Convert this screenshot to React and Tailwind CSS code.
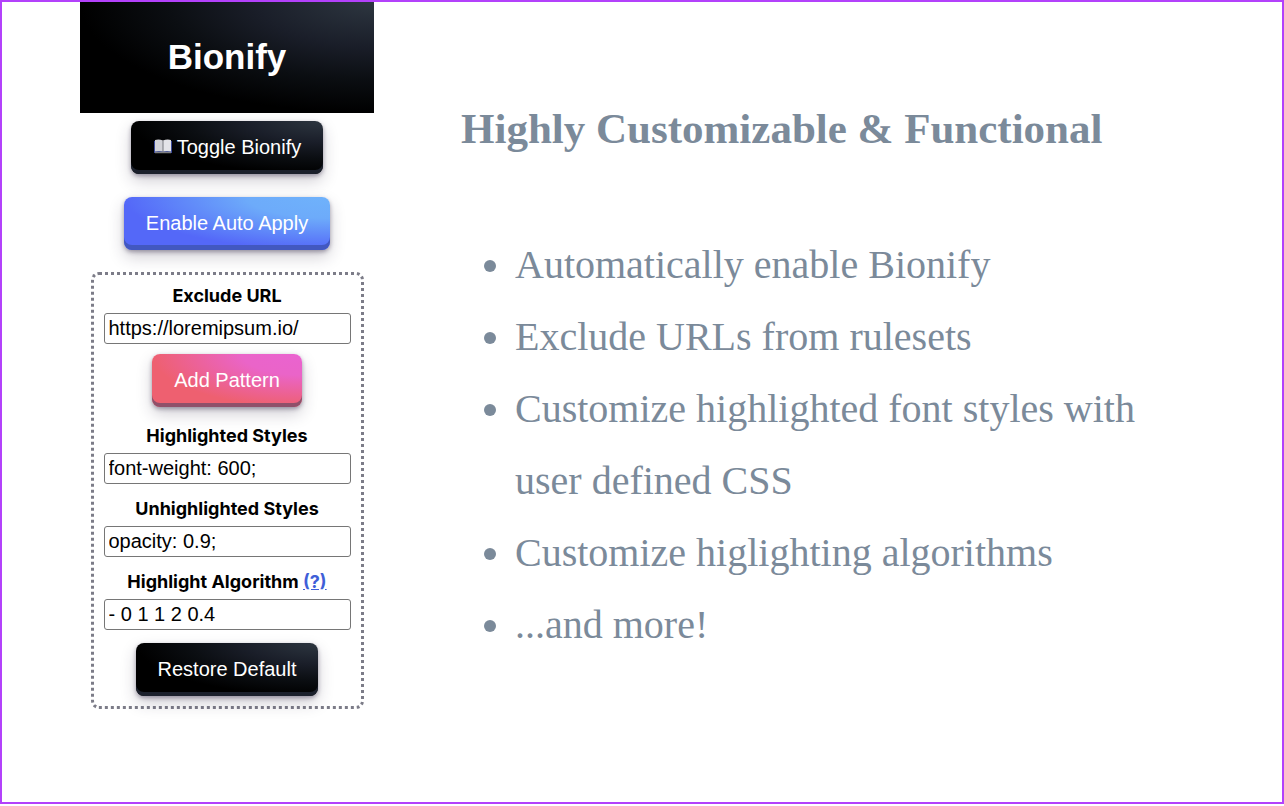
import React from "react";

const DARK =
  "bg-[radial-gradient(100%_100%_at_100%_0%,#2d3640_0%,#1a1e29_40%,#0b0e12_70%,#000000_100%)] shadow-[0_2px_4px_rgba(45,35,66,0.4),0_7px_16px_rgba(45,35,66,0.22),inset_0_-4px_0_#1b202c]";
const BLUE =
  "bg-[radial-gradient(100%_100%_at_100%_0%,#6fb2fb_0%,#6dabfa_40%,#5468f8_100%)] shadow-[0_2px_4px_rgba(45,35,66,0.4),0_7px_16px_rgba(45,35,66,0.22),inset_0_-5px_0_#4258c0]";
const PINK =
  "bg-[radial-gradient(100%_100%_at_100%_0%,#ea63d0_0%,#ea64c8_40%,#ee6070_100%)] shadow-[0_2px_4px_rgba(45,35,66,0.4),0_7px_16px_rgba(45,35,66,0.22),inset_0_-4px_0_#8f506a]";

function BookIcon() {
  return (
    <svg className="h-4 w-5" viewBox="0 0 20 16" aria-hidden="true">
      <path d="M1 2h18v12H1z" fill="#3b4a9a" />
      <path d="M2 1Q6 0 10 1.500V12.500Q6 11.500 2 12.500z" fill="#d3d3d8" />
      <path d="M18 1Q14 0 10 1.500V12.500Q14 11.500 18 12.500z" fill="#e4e4e8" />
      <path d="M10 1.500V13" stroke="#77797f" strokeWidth="1" />
      <path d="M2 13.500h16" stroke="#7f8084" strokeWidth="1.500" />
    </svg>
  );
}

function GlossyButton({ tone, children }) {
  return (
    <button
      type="button"
      className={`flex h-[53px] items-center justify-center gap-1 rounded-lg px-[22px] pb-0.5 text-xl text-white ${tone}`}
    >
      {children}
    </button>
  );
}

function Field({ id, label, value, help }) {
  return (
    <div className="flex w-full flex-col items-center gap-[3px]">
      <div className="font-[Inter,sans-serif] text-lg leading-[29px] font-bold text-black">
        <label htmlFor={id}>{label}</label>
        {help && (
          <>
            {" "}
            <a href="#help" className="text-[#3f5fd8] underline">
              (?)
            </a>
          </>
        )}
      </div>
      <input
        id={id}
        type="text"
        defaultValue={value}
        className="h-[31px] w-full rounded-[3px] border border-[#767676] bg-white px-1 text-xl text-black"
      />
    </div>
  );
}

export default function App() {
  return (
    <main className="flex min-h-[calc(100vh-2px)] items-start border-2 border-[#b341fb] bg-white px-[78px] font-['Liberation_Sans',Arial,sans-serif]">
      <section className="flex w-[294px] shrink-0 flex-col items-center">
        <header className="flex h-[111px] w-full items-center justify-center bg-[radial-gradient(100%_100%_at_100%_0%,#2d3640_0%,#1a1e29_40%,#0b0e12_70%,#000000_100%)] pb-0.5">
          <h1 className="text-[35px] leading-10 font-bold text-white">Bionify</h1>
        </header>
        <div className="flex flex-col items-center gap-[23px] pt-2 pb-[22px]">
          <GlossyButton tone={DARK}>
            <BookIcon />
            Toggle Bionify
          </GlossyButton>
          <GlossyButton tone={BLUE}>Enable Auto Apply</GlossyButton>
        </div>
        <form className="flex w-[273px] flex-col items-center gap-[10px] rounded-lg border-3 border-dotted border-[#7c7c88] px-[10px] pt-[6px] pb-[10px]">
          <Field id="exclude" label="Exclude URL" value="https://loremipsum.io/" />
          <GlossyButton tone={PINK}>Add Pattern</GlossyButton>
          <div className="flex w-full flex-col gap-[10px] pt-1 pb-[3px]">
            <Field id="highlighted" label="Highlighted Styles" value="font-weight: 600;" />
            <Field id="unhighlighted" label="Unhighlighted Styles" value="opacity: 0.9;" />
            <Field id="algorithm" label="Highlight Algorithm" value="- 0 1 1 2 0.4" help />
          </div>
          <GlossyButton tone={DARK}>Restore Default</GlossyButton>
        </form>
      </section>
      <section className="ml-[87px] flex-1 pt-[99px] font-[Palatino,'Palatino_Linotype','Liberation_Serif',serif] text-[#7b8a9a]">
        <h2 className="text-[43px] leading-[56px] font-bold">Highly Customizable &amp; Functional</h2>
        <ul className="list-disc pt-[72px] pl-[54px] text-[40px] leading-[72px]">
          <li>Automatically enable Bionify</li>
          <li>Exclude URLs from rulesets</li>
          <li>
            Customize highlighted font styles with
            <br />
            user defined CSS
          </li>
          <li>Customize higlighting algorithms</li>
          <li>...and more!</li>
        </ul>
      </section>
    </main>
  );
}
